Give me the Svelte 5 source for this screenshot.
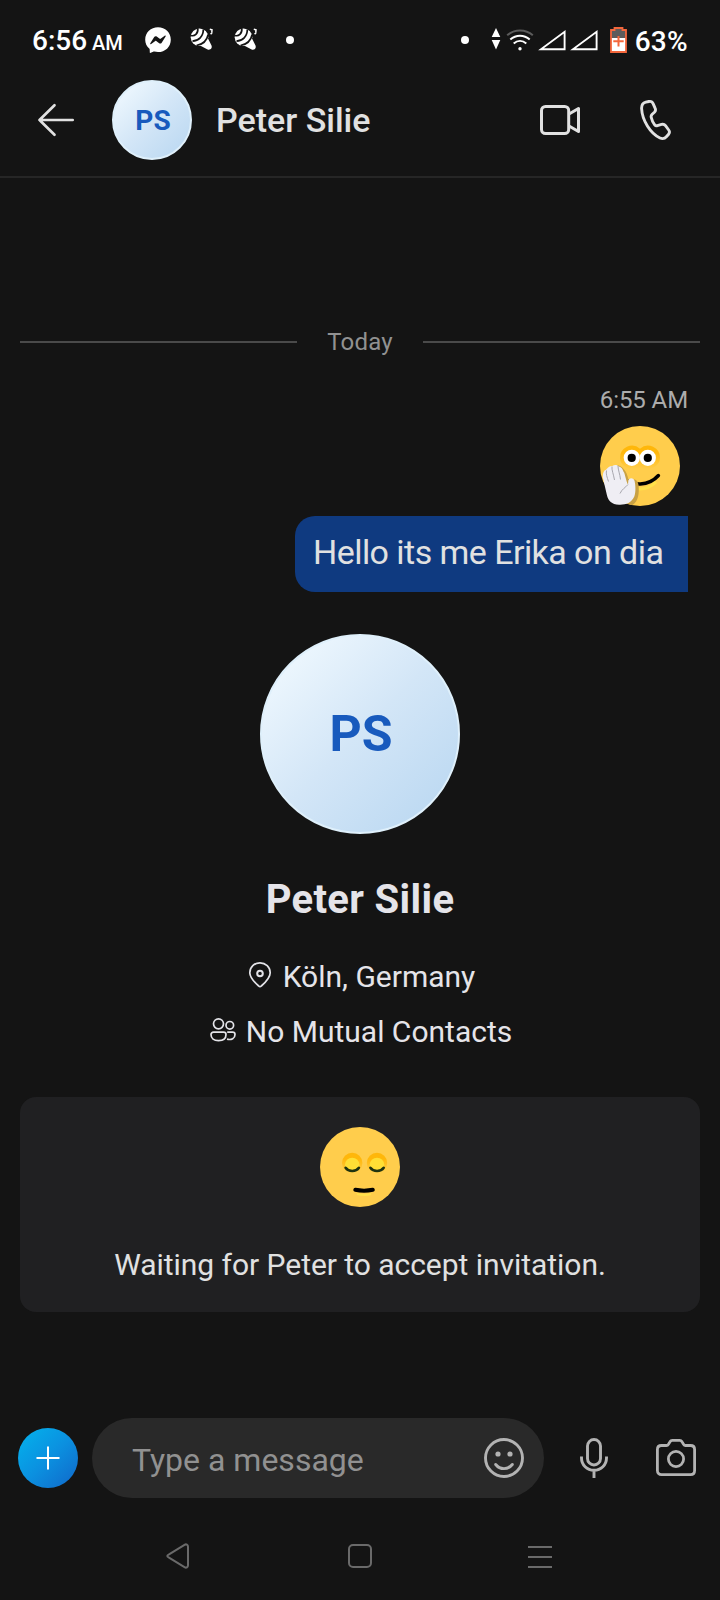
<script>
    let contact = {
        name: 'Peter Silie',
        initials: 'PS',
        location: 'Köln, Germany',
        mutual: 'No Mutual Contacts'
    };
    let alerts = [1, 2];
    let sims = [1, 2];
    let draft = '';
</script>

<div class="screen">
    <div class="status-bar">
        <div class="clock">6:56 <span class="ampm">AM</span></div>
        <svg class="messenger" width="26" height="26" viewBox="0 0 26 26">
            <path d="M13 0.3C5.8 0.3 0.2 5.5 0.2 12.7c0 3.6 1.5 6.7 4 8.9 0.5 0.5 0.5 0.8 0.5 1.4l0.1 2.4c0.1 0.5 0.5 0.6 0.9 0.4l2.5-1.1c0.4-0.2 0.7-0.2 1.1-0.1 1.2 0.3 2.4 0.5 3.7 0.5 7.2 0 12.8-5.2 12.8-12.4S20.2 0.3 13 0.3z" fill="#fff" />
            <path d="M5.3 16.2l3.9-6.1c0.6-0.9 1.7-1.1 2.5-0.5l3 2.2c0.3 0.2 0.6 0.2 0.9 0l4.1-3.1c0.6-0.4 1.3 0.2 0.9 0.9l-3.9 6.1c-0.6 0.9-1.7 1.1-2.5 0.5l-3-2.2c-0.3-0.2-0.6-0.2-0.9 0l-4.1 3.1c-0.6 0.4-1.3-0.2-0.9-0.9z" fill="#141414" />
        </svg>
        {#each alerts as alert}
            <svg class="rattle" width="24" height="24" viewBox="0 0 24 24">
                <path d="M10 17.500L17.500 9.500L21.500 17.600C22.500 20.400 20.300 22.300 17.600 21.500z" fill="#fff" />
                <circle cx="9.5" cy="9.3" r="8.8" fill="#fff" />
                <path d="M1 7.5C4.5 8.5 8.3 5.8 7.800 0.5M2.500 13.200C8.500 12.800 13.400 8.500 13.300 1.600M6.500 17.500C12.500 16.500 17 12.200 18.200 6.500" fill="none" stroke="#141414" stroke-width="1.7" />
                <path d="M19.800 1.300l2.200 0.600-0.200 2.500M20.600 6.300l1.600-1.800" fill="none" stroke="#fff" stroke-width="1.5" />
            </svg>
        {/each}
        <span class="bullet first"></span>
        <span class="spacer"></span>
        <span class="bullet"></span>
        <svg class="traffic" width="10" height="24" viewBox="0 0 10 24">
            <path d="M5 1L9.3 10H0.7zM5 22.500L9.300 13H0.700z" fill="#fff" />
        </svg>
        <svg class="wifi" width="28" height="24" viewBox="0 0 28 24" fill="none" stroke="#fff" stroke-width="2">
            <path d="M1.2 7.3C8.5 0.9 19.500 0.900 26.800 7.300" stroke="#5c5c5c" />
            <path d="M4.3 11.5C10 6.500 18 6.500 23.700 11.500M7.700 15.500C11.500 12.200 16.500 12.200 20.300 15.500" />
            <circle cx="14" cy="20.800" r="1.7" fill="#fff" stroke="none" />
        </svg>
        {#each sims as sim}
            <svg class="signal" width="28" height="22" viewBox="0 0 28 22">
                <path d="M3 20.200H26.600V2.800z" fill="none" stroke="#fff" stroke-width="1.9" />
            </svg>
        {/each}
        <svg class="battery" width="17" height="26" viewBox="0 0 17 26">
            <path d="M1 3H4.500V1H12.500V3H16V25H1z" fill="#5c5c5c" />
            <path d="M1 11H16V25H1z" fill="#fff" />
            <path d="M1 3H4.500V1H12.500V3H16V25H1z" fill="none" stroke="#f4673c" stroke-width="1.800" />
            <path d="M8.500 9V19.500M3.300 14.300H13.700" stroke="#f4673c" stroke-width="2" />
        </svg>
        <div class="percent">63%</div>
    </div>

    <header>
        <svg class="back" width="40" height="40" viewBox="0 0 40 40" fill="none" stroke="#e1e1e1" stroke-width="2.7" stroke-linecap="round" stroke-linejoin="round">
            <path d="M36.700 20H3.500M18.500 5.300L3.500 20L18.500 34.700" />
        </svg>
        <div class="avatar small">{contact.initials}</div>
        <div class="title">{contact.name}</div>
        <span class="spacer"></span>
        <svg class="video" width="40" height="40" viewBox="0 0 40 40" fill="none" stroke="#e1e1e1" stroke-width="3" stroke-linejoin="round">
            <rect x="1.5" y="6.5" width="27.2" height="27" rx="4" />
            <path d="M29 14L38.500 8.500V31.500L29 26" />
        </svg>
        <svg class="phone" width="34" height="42" viewBox="0 0 34 42" fill="none" stroke="#e1e1e1" stroke-width="2.9" stroke-linejoin="round">
            <path d="M6.800 3.200L9.900 2.500C11.700 2.100 13.400 3 14.100 4.600L16.100 9.200C16.800 10.700 16.500 12.200 15.400 13.300L13.200 15.300C12.300 16.200 11.900 17 12.200 18.200C12.800 21 14 23.600 15.700 25.800C16.500 26.800 17.400 27 18.400 26.700L22.500 25.400C24.100 24.900 25.500 25.400 26.500 26.700L29.700 31C30.700 32.400 30.600 34 29.600 35.200L27.600 37.500C25.900 39.500 23.400 40.100 21 39C11.300 34.300 3.200 21.400 2.600 9.500C2.500 6.600 4 4 6.800 3.200z" />
        </svg>
    </header>

    <main>
        <div class="day"><span>Today</span></div>

        <div class="sent">
            <div class="time">6:55 AM</div>
            <svg class="wave" width="80" height="80" viewBox="0 0 80 80">
                <defs>
                    <linearGradient id="brow" x1="0" y1="0" x2="0" y2="1">
                        <stop offset="0.3" stop-color="#ffb70a" />
                        <stop offset="1" stop-color="#ffcd4c" />
                    </linearGradient>
                    <clipPath id="face"><circle cx="40" cy="40" r="40" /></clipPath>
                </defs>
                <circle cx="40" cy="40" r="40" fill="#ffcd4c" />
                <path d="M20 32a12 12 0 0 1 20-9.300a12 12 0 0 1 20 9.300c0 6-6 11-12 11H32c-6 0-12-5-12-11z" fill="url(#brow)" />
                <circle cx="31.800" cy="31.800" r="8.1" fill="#fff" />
                <circle cx="47.800" cy="31.800" r="8.1" fill="#fff" />
                <circle cx="31.700" cy="31.900" r="4.1" fill="#000" />
                <circle cx="47.800" cy="31.900" r="4.1" fill="#000" />
                <path d="M30 61C41 65 50 62 56 56" fill="none" stroke="#ffe14a" stroke-width="3" />
                <path d="M22 51C32 61 49 60 58.400 49.500" fill="none" stroke="#000" stroke-width="3.5" stroke-linecap="round" />
                <path clip-path="url(#face)" d="M15 39C22 39 27 45 28.500 54L34 53.500C38 54 39 58 38.800 65C38.500 73 35.500 80 28 80H18z" fill="#c9a144" />
                <path d="M2.700 51C2.700 47 4 44.500 6 43.800C8 41 10 39.800 12.300 40C14.500 38.300 17.500 38.600 19 40.600C21.500 41.300 22.600 43 23.400 45.500C24.700 47 25 49.500 25.700 52C26.300 54.300 27 57 28 58.500L28.300 55C28.500 51.500 33.500 51 34.600 55C35.500 59 36 66 34.300 70.500C31.500 77 25.500 79 19 78.700C11.500 78.400 8.500 75 7 69.500z" fill="#efeef4" />
                <path d="M6.500 44.500C5.800 48 7 51 8.500 55.500M12 40.500C11.500 44 13.500 48 14.500 54M18 40C18 44 20 48 20.500 53.500M28 58.500C25 62 22 63 20 67.500" fill="none" stroke="#a8a7ae" stroke-width="1" />
            </svg>
            <div class="bubble">Hello its me Erika on dia</div>
        </div>

        <div class="avatar large">{contact.initials}</div>
        <h1>{contact.name}</h1>

        <div class="info place">
            <svg class="pin" width="24" height="28" viewBox="0 0 24 28" fill="none" stroke="#e3e3e8" stroke-width="1.7">
                <path d="M12 25.600C11.500 25.600 11.100 25.400 10.700 25C5 20 1.800 16.200 1.800 11.700C1.800 6 6.400 1.800 12 1.800S22.200 6 22.200 11.700C22.200 16.200 19 20 13.300 25C12.900 25.400 12.500 25.600 12 25.600z" />
                <circle cx="12" cy="12.500" r="2.8" stroke-width="2" />
            </svg>
            <span>{contact.location}</span>
        </div>
        <div class="info mutual">
            <svg class="people" width="28" height="26" viewBox="0 0 28 26" fill="none" stroke="#e3e3e8" stroke-width="1.7">
                <circle cx="9.500" cy="6.800" r="5" />
                <circle cx="20.800" cy="8.300" r="3.8" />
                <path d="M4.500 15.200H14.500C16 15.200 17 16 17 17.500C17 21.500 14 23.600 9.500 23.600S2 21.500 2 17.500C2 16 3 15.200 4.500 15.200z" />
                <path d="M18.200 15.200H23.500C25 15.200 26 16 26 17.500C26 21.500 22.500 23.200 18 22.200" />
            </svg>
            <span>{contact.mutual}</span>
        </div>

        <section class="card">
            <svg width="80" height="80" viewBox="0 0 80 80">
                <defs>
                    <linearGradient id="lid" x1="0" y1="0" x2="0" y2="1">
                        <stop offset="0.3" stop-color="#ffb70a" />
                        <stop offset="1" stop-color="#ffcd4c" />
                    </linearGradient>
                </defs>
                <circle cx="40" cy="40" r="40" fill="#ffcd4c" />
                <circle cx="32.200" cy="36" r="10.2" fill="url(#lid)" />
                <circle cx="57" cy="36" r="10.2" fill="url(#lid)" />
                <circle cx="32.200" cy="38" r="7.3" fill="#ffdf35" />
                <circle cx="57" cy="38" r="7.3" fill="#ffdf35" />
                <path d="M25.600 40.800C28.500 45 36 45 38.900 40.800M50.400 40.800C53.300 45 60.800 45 63.700 40.800" fill="none" stroke="#1f3310" stroke-width="2.6" stroke-linecap="round" />
                <path d="M37 67C42 68.300 47 68.300 51 67" fill="none" stroke="#ffe14a" stroke-width="2" />
                <path d="M35.300 62.800C41 63.900 47 63.900 52.800 62.800" fill="none" stroke="#000" stroke-width="4" stroke-linecap="round" />
            </svg>
            <p>Waiting for Peter to accept invitation.</p>
        </section>
    </main>

    <div class="composer">
        <button class="add" aria-label="Add">
            <svg width="24" height="24" viewBox="0 0 24 24">
                <path d="M12 0.500V23.500M0.500 12H23.500" stroke="#fff" stroke-width="2" />
            </svg>
        </button>
        <div class="field">
            <input type="text" placeholder="Type a message" bind:value={draft} />
            <svg width="40" height="40" viewBox="0 0 40 40" fill="none" stroke="#b3b3b3" stroke-width="2.9" stroke-linecap="round">
                <circle cx="20" cy="20" r="18.500" />
                <path d="M11.700 26.500C16 32 24 32 28.300 26.500" />
                <circle cx="14" cy="16" r="2.6" fill="#b3b3b3" stroke="none" />
                <circle cx="26" cy="16" r="2.6" fill="#b3b3b3" stroke="none" />
            </svg>
        </div>
        <svg class="mic" width="28" height="40" viewBox="0 0 28 40" fill="none" stroke="#b3b3b3" stroke-width="2.9">
            <rect x="7.500" y="1.500" width="13" height="25.500" rx="6.500" />
            <path d="M1.500 18.500V20C1.500 27 7 32.300 14 32.300S26.500 27 26.500 20V18.500M14 32.500V40" />
        </svg>
        <svg class="camera" width="40" height="40" viewBox="0 0 40 40" fill="none" stroke="#b3b3b3" stroke-width="2.8" stroke-linejoin="round">
            <path d="M5.500 7.500H10.500C11.500 7.500 12 7 12.500 6.200L14 3.800C14.500 2.900 15.300 2.400 16.300 2.400H23.700C24.700 2.400 25.500 2.900 26 3.800L27.500 6.200C28 7 28.500 7.500 29.500 7.500H34.500C37 7.500 38.600 9.100 38.600 11.500V32.500C38.600 35 37 36.600 34.500 36.600H5.500C3 36.600 1.400 35 1.400 32.500V11.500C1.400 9.100 3 7.500 5.500 7.500z" />
            <circle cx="20" cy="21" r="7.600" />
        </svg>
    </div>

    <nav>
        <svg width="28" height="28" viewBox="0 0 28 28">
            <path d="M3 12.300L18.500 2.800C20.300 1.800 22 2.700 22 4.700V23.300C22 25.300 20.300 26.200 18.500 25.200L3 15.700C0.700 14.500 0.700 13.500 3 12.300z" />
        </svg>
        <svg width="28" height="28" viewBox="0 0 28 28">
            <rect x="3" y="3" width="22" height="22" rx="4" />
        </svg>
        <svg width="28" height="28" viewBox="0 0 28 28">
            <path d="M2 5H26M2 15H26M2 25H26" />
        </svg>
    </nav>
</div>

<style>
    :global(body) {
        margin: 0;
        background: #141414;
    }

    .screen {
        display: flex;
        flex-direction: column;
        width: 720px;
        height: 1600px;
        overflow: hidden;
        background: #141414;
        color: #e1e1e1;
        font-family: Roboto, sans-serif;
    }

    svg {
        display: block;
        flex: none;
    }

    .spacer {
        flex: 1;
    }

    .status-bar {
        display: flex;
        align-items: center;
        height: 80px;
        box-sizing: border-box;
        padding: 0 32px;
        color: #fff;
        font-size: 28px;
        font-weight: 500;
        line-height: 40px;
        white-space: nowrap;
    }

    .clock {
        width: 113px;
        padding-top: 3px;
    }

    .ampm {
        font-size: 20px;
        margin-left: -2px;
    }

    .percent {
        padding-top: 3px;
        letter-spacing: 0.3px;
    }

    .rattle {
        margin-left: 20px;
    }

    .messenger + .rattle {
        margin-left: 19px;
    }

    .bullet {
        width: 8px;
        height: 8px;
        border-radius: 50%;
        background: #fff;
    }

    .bullet.first {
        margin-left: 28px;
    }

    .traffic {
        margin: -2px 5px 0 22px;
    }

    .signal {
        margin-left: 4px;
    }

    .battery {
        margin: 0 8px 0 12px;
    }

    header {
        display: flex;
        align-items: center;
        height: 80px;
        padding: 0 47px 16px 36px;
        border-bottom: 2px solid #262626;
    }

    .avatar {
        display: flex;
        align-items: center;
        justify-content: center;
        box-sizing: border-box;
        flex: none;
        padding-left: 2px;
        border-radius: 50%;
        background: linear-gradient(135deg, #f2faff 5%, #d3e6f7 50%, #b9d7f1 95%);
        border: 2px solid #dff0fb;
        background-origin: border-box;
        color: #185abd;
        font-weight: 700;
    }

    .small {
        width: 80px;
        height: 80px;
        margin-left: 36px;
        font-size: 28px;
    }

    .title {
        margin-left: 24px;
        font-size: 34px;
        font-weight: 500;
        line-height: 40px;
    }

    .phone {
        margin-left: 59px;
    }

    main {
        display: flex;
        flex-direction: column;
        align-items: center;
        flex: 1;
        padding: 150px 20px 0;
    }

    .day {
        display: flex;
        align-items: center;
        align-self: stretch;
        gap: 30px;
        color: #919191;
        font-size: 24px;
        line-height: 28px;
        letter-spacing: 0.15px;
    }

    .day::before,
    .day::after {
        content: '';
        flex: 1;
        height: 2px;
        background: #4a4a4a;
    }

    .sent {
        display: flex;
        flex-direction: column;
        align-items: flex-end;
        align-self: stretch;
        padding-right: 12px;
        margin-top: 30px;
    }

    .time {
        color: #acacac;
        font-size: 24px;
        line-height: 28px;
        letter-spacing: -0.1px;
    }

    .wave {
        margin: 12px 8px 10px 0;
    }

    .bubble {
        box-sizing: border-box;
        width: 393px;
        height: 76px;
        padding-left: 18px;
        border-radius: 20px 0 0 20px;
        background: #0f3a80;
        font-size: 34px;
        line-height: 73px;
        letter-spacing: -0.55px;
        white-space: nowrap;
    }

    .large {
        width: 200px;
        height: 200px;
        margin-top: 42px;
        font-size: 50px;
    }

    h1 {
        margin: 42px 0 33px;
        color: #e5e4e9;
        font-size: 40px;
        font-weight: 700;
        line-height: 48px;
        letter-spacing: 0.35px;
    }

    .info {
        display: flex;
        align-items: center;
        height: 40px;
        color: #e5e4e9;
        font-size: 30px;
        line-height: 40px;
    }

    .place {
        padding-left: 3px;
    }

    .pin {
        margin: -4px 11px 0 0;
    }

    .mutual {
        margin-top: 15px;
        padding-left: 1px;
    }

    .people {
        margin: -4px 9px 0 0;
    }

    .card {
        display: flex;
        flex-direction: column;
        align-items: center;
        align-self: stretch;
        box-sizing: border-box;
        height: 215px;
        margin-top: 45px;
        padding-top: 30px;
        border-radius: 16px;
        background: #202022;
    }

    .card p {
        margin: 40px 0 0;
        font-size: 30px;
        line-height: 36px;
        letter-spacing: -0.04px;
    }

    .composer {
        display: flex;
        align-items: center;
        height: 80px;
        padding: 0 24px 0 18px;
    }

    .add {
        display: flex;
        align-items: center;
        justify-content: center;
        width: 60px;
        height: 60px;
        padding: 0;
        border: none;
        border-radius: 50%;
        background: linear-gradient(135deg, #04b0ec 5%, #0b91e0 50%, #106bcb 95%);
        cursor: pointer;
    }

    .field {
        display: flex;
        align-items: center;
        box-sizing: border-box;
        width: 452px;
        height: 80px;
        margin-left: 14px;
        padding: 0 20px 0 40px;
        border-radius: 40px;
        background: #292929;
    }

    input {
        flex: 1;
        min-width: 0;
        height: 44px;
        padding: 4px 0 0;
        border: none;
        outline: none;
        background: none;
        color: #e1e1e1;
        font: 32px Roboto, sans-serif;
    }

    input::placeholder {
        color: #919191;
        opacity: 1;
    }

    .mic {
        margin-left: 36px;
    }

    .camera {
        margin-left: auto;
    }

    nav {
        display: flex;
        justify-content: center;
        gap: 152px;
        height: 58px;
        padding: 44px 0 0;
    }

    nav svg {
        fill: none;
        stroke: #6a6a6a;
        stroke-width: 2px;
    }
</style>
